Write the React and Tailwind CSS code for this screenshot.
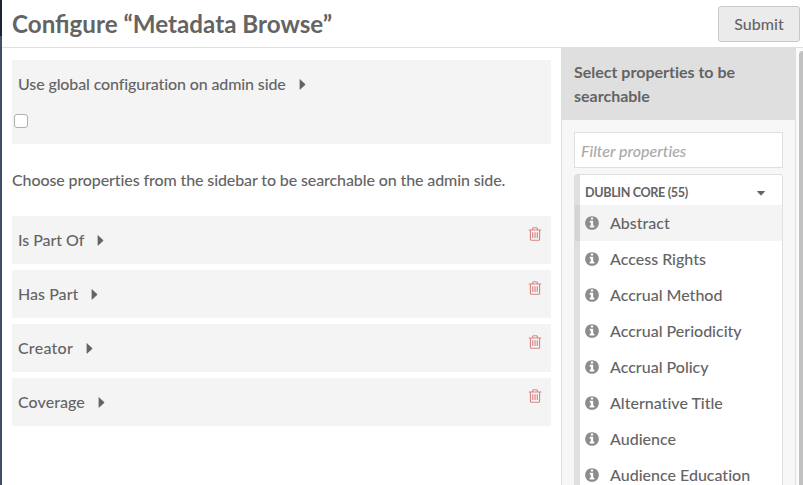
import React from "react";

const PROPERTIES = [
  "Abstract",
  "Access Rights",
  "Accrual Method",
  "Accrual Periodicity",
  "Accrual Policy",
  "Alternative Title",
  "Audience",
  "Audience Education",
];

const SELECTED = [
  { label: "Is Part Of", tracking: "tracking-[-0.04px]" },
  { label: "Has Part", tracking: "tracking-[0.04px]" },
  { label: "Creator", tracking: "tracking-[0.25px]" },
  { label: "Coverage", tracking: "tracking-[0.06px]" },
];

function CaretRight() {
  return (
    <svg className="ml-[13px] h-[11px] w-[7px] shrink-0" viewBox="0 0 7 11" fill="currentColor" aria-hidden="true">
      <path d="M0.6 0.6Q0.6 0 1.2 0.4L6.1 5Q6.5 5.5 6.1 6L1.2 10.6Q0.6 11 0.6 10.3Z" />
    </svg>
  );
}

function InfoIcon() {
  return (
    <svg className="size-4 shrink-0 text-[#8c8c8c]" viewBox="0 0 1792 1792" fill="currentColor" aria-hidden="true">
      <path d="M1152 1376v-160q0-14-9-23t-23-9h-96v-512q0-14-9-23t-23-9h-320q-14 0-23 9t-9 23v160q0 14 9 23t23 9h96v320h-96q-14 0-23 9t-9 23v160q0 14 9 23t23 9h448q14 0 23-9t9-23zm-128-896v-160q0-14-9-23t-23-9h-192q-14 0-23 9t-9 23v160q0 14 9 23t23 9h192q14 0 23-9t9-23zm640 416q0 209-103 385.5t-279.5 279.5-385.5 103-385.5-103-279.5-279.5-103-385.5 103-385.5 279.5-279.5 385.5-103 385.5 103 279.5 279.5 103 385.5z" />
    </svg>
  );
}

function TrashIcon() {
  return (
    <svg className="size-4" viewBox="0 0 1792 1792" fill="currentColor" aria-hidden="true">
      <path d="M704 736v576q0 14-9 23t-23 9h-64q-14 0-23-9t-9-23v-576q0-14 9-23t23-9h64q14 0 23 9t9 23zm256 0v576q0 14-9 23t-23 9h-64q-14 0-23-9t-9-23v-576q0-14 9-23t23-9h64q14 0 23 9t9 23zm256 0v576q0 14-9 23t-23 9h-64q-14 0-23-9t-9-23v-576q0-14 9-23t23-9h64q14 0 23 9t9 23zm128 724v-948h-896v948q0 22 7 40.5t14.5 27 10.5 8.5h832q3 0 10.5-8.5t14.5-27 7-40.5zm-672-1076h448l-48-117q-7-9-17-11h-317q-10 2-17 11zm928 32v64q0 14-9 23t-23 9h-96v948q0 83-47 143.5t-113 60.5h-832q-66 0-113-58.5t-47-141.5v-952h-96q-14 0-23-9t-9-23v-64q0-14 9-23t23-9h309l70-167q15-37 54-63t79-26h320q40 0 79 26t54 63l70 167h309q14 0 23 9t9 23z" />
    </svg>
  );
}

function SelectedRow({ label, tracking }) {
  return (
    <li className="flex h-12 items-start justify-between bg-[#f4f4f4] pl-1.5 pr-2">
      <div className="flex h-12 items-center">
        <span className={tracking}>{label}</span>
        <CaretRight />
      </div>
      <button type="button" aria-label="Remove" className="mt-2.5 text-[#d98585]">
        <TrashIcon />
      </button>
    </li>
  );
}

function Sidebar() {
  return (
    <aside className="w-[235px] shrink-0 border-x border-[#dfdfdf] bg-[#f7f7f7]">
      <h2 className="h-[72px] bg-[#dfdfdf] px-3 py-3 text-base/6 font-bold">
        Select properties to be searchable
      </h2>
      <div className="px-3 pt-3">
        <input
          type="text"
          placeholder="Filter properties"
          className="block h-9 w-[209px] border border-[#dfdfdf] bg-white px-1.5 text-base italic outline-none placeholder:text-[#a9a9a9]"
        />
        <section className="mt-1.5 h-[330px] w-[209px] rounded-t-[3px] border border-[#dfdfdf] bg-white">
          <div className="flex h-[30px] items-center justify-between border-l-[5px] border-[#dfdfdf] pl-[5px] pr-[17.5px] pt-[6px] text-[12.6px] font-bold tracking-[-0.36px]">
            <span>DUBLIN CORE (55)</span>
            <svg className="h-[5px] w-2" viewBox="0 0 8 5" fill="currentColor" aria-hidden="true">
              <path d="M0.4 0H7.6Q8.2 0.2 7.7 0.8L4.4 4.2Q4 4.6 3.6 4.2L0.3 0.8Q-0.2 0.2 0.4 0Z" />
            </svg>
          </div>
          <ul>
            {PROPERTIES.map((name, i) => (
              <li
                key={name}
                className={
                  i === 0
                    ? "flex h-9 items-center border-l-[5px] border-[#d5d5d5] bg-[#f4f4f4] pl-1"
                    : "flex h-9 items-center border-l-[5px] border-[#dfdfdf] pl-1"
                }
              >
                <InfoIcon />
                <span className="ml-2.5 whitespace-nowrap">{name}</span>
              </li>
            ))}
          </ul>
        </section>
      </div>
    </aside>
  );
}

export default function App() {
  return (
    <div className="flex h-[485px] w-[803px] overflow-hidden bg-white font-[Lato,sans-serif] text-base/6 font-medium text-[#646464] [font-variant-ligatures:none]">
      <div className="flex w-0.5 shrink-0 flex-col">
        <div className="h-9 bg-[#1b2231]" />
        <div className="grow bg-[#404e67]" />
      </div>
      <div className="flex min-w-0 grow flex-col">
        <header className="flex h-12 shrink-0 items-center justify-between border-b border-[#dfdfdf] pl-2.5 pr-[3px]">
          <h1 className="text-[24.2px] font-bold [font-variant-ligatures:normal]">Configure “Metadata Browse”</h1>
          <button type="button" className="h-9 w-[82px] rounded-[3px] border border-[#c8c8c8] bg-[#ebebeb]">
            Submit
          </button>
        </header>
        <div className="flex min-h-0 grow">
          <main className="grow px-2.5 pt-3">
            <div className="h-[84px] bg-[#f4f4f4]">
              <div className="flex h-12 items-center pl-1.5">
                <span className="tracking-[-0.12px]">Use global configuration on admin side</span>
                <CaretRight />
              </div>
              <input
                type="checkbox"
                className="ml-0.5 mt-1.5 block size-3.5 appearance-none rounded-[3px] border border-[#b0b0b0] bg-white"
              />
            </div>
            <p className="mt-6 tracking-[-0.11px]">
              Choose properties from the sidebar to be searchable on the admin side.
            </p>
            <ul className="mt-6 flex flex-col gap-1.5">
              {SELECTED.map((item) => (
                <SelectedRow key={item.label} label={item.label} tracking={item.tracking} />
              ))}
            </ul>
          </main>
          <Sidebar />
          <div className="w-[7px] shrink-0 bg-[#fafafa] pl-[3px] pt-[3px]">
            <div className="h-full rounded-tl-[4px] bg-[#c1c1c1]" />
          </div>
        </div>
      </div>
    </div>
  );
}
